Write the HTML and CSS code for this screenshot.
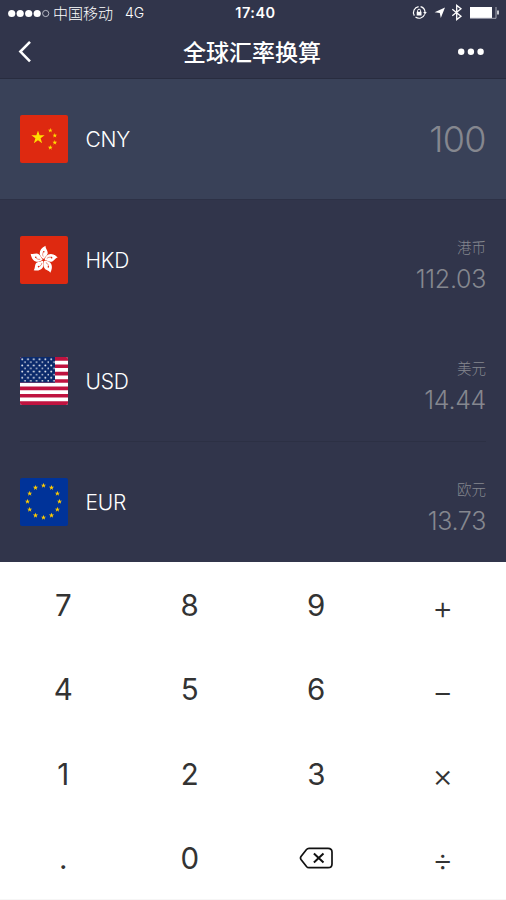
FILE: index.html
```
<!DOCTYPE html>
<html lang="zh-CN">
<head>
    <meta charset="UTF-8">
    <meta name="viewport" content="width=device-width, initial-scale=1.0">
    <title>全球汇率换算</title>
    <link rel="stylesheet" href="styles.css">
</head>
<body>
    <!-- Shared shapes for the flags -->
    <svg class="defs" aria-hidden="true">
        <symbol id="star" viewBox="-10 -10 20 20">
            <path d="M0-10 2.3-3.1H9.5L3.7 1.2 5.9 8.1 0 3.8-5.9 8.1-3.7 1.2-9.5-3.1H-2.3Z"/>
        </symbol>
        <pattern id="dots" width="5.8" height="6.2" patternUnits="userSpaceOnUse">
            <circle cx="2.2" cy="2.2" r=".95" fill="#fff"/>
            <circle cx="5" cy="5.2" r=".8" fill="#fff"/>
        </pattern>
    </svg>

    <div class="app">
        <div class="status-bar">
            <div class="carrier">
                <svg class="signal" width="42" height="9" viewBox="0 0 42 9" fill="#fff">
                    <circle cx="3.7" cy="4.5" r="3.6"/>
                    <circle cx="12.2" cy="4.5" r="3.6"/>
                    <circle cx="20.7" cy="4.5" r="3.6"/>
                    <circle cx="29.2" cy="4.5" r="3.6"/>
                    <circle cx="37.7" cy="4.5" r="3.1" fill="none" stroke="#c5c7d0" stroke-width=".9"/>
                </svg>
                <span class="operator">中国移动</span>
                <span class="network">4G</span>
            </div>
            <span class="time">17:40</span>
            <svg class="status-icons" width="90" height="18" viewBox="410 4 90 18" fill="none" stroke="#fff">
                <path d="M414.3 15.6A6 6 0 0 1 418.6 6.6M420.6 6.7A6 6 0 0 1 425 12M424.7 14.4A6 6 0 0 1 415.5 17" stroke-width="1.2"/>
                <path d="M423.2 12h3.6l-1.8 2.4Z" fill="#fff" stroke="none"/>
                <path d="M416.7 11.8h4.8v3.7h-4.8Z" fill="#fff" stroke="none"/>
                <path d="M417.6 12v-1.3a1.5 1.5 0 0 1 3 0V12"/>
                <path d="M445 7.4 440.8 18 439.8 13 434.6 12.2Z" fill="#fff" stroke="none"/>
                <path d="M452.3 9.2 461 16.2 456.7 19.6V5.4L461 8.8 452.3 15.8" stroke-width="1.3"/>
                <path d="M470 7h22v11h-22Z" fill="#fff" stroke="none"/>
                <path d="M470 18.3h26V7" stroke="#a3a6b2"/>
                <path d="M498 10.5v4" stroke="#d5d6dc" stroke-width="1.8"/>
            </svg>
        </div>

        <div class="nav">
            <svg class="back" width="16" height="24" viewBox="0 0 16 24" fill="none" stroke="#fff" stroke-width="2.6">
                <path d="M13 1.8 3.4 11.6l9.6 9.8"/>
            </svg>
            <h1>全球汇率换算</h1>
            <svg class="more" width="28" height="8" viewBox="0 0 28 8" fill="#fff">
                <circle cx="3.2" cy="3.8" r="3.2"/>
                <circle cx="12.9" cy="3.8" r="3.2"/>
                <circle cx="22.6" cy="3.8" r="3.2"/>
            </svg>
        </div>

        <div class="currency active">
            <svg class="flag" viewBox="0 0 48 48">
                <rect width="48" height="48" fill="#de2910"/>
                <g fill="#ffde00">
                    <use href="#star" x="11" y="15.5" width="14" height="14"/>
                    <use href="#star" x="27.8" y="12.9" width="5" height="5"/>
                    <use href="#star" x="32.3" y="18" width="5" height="5"/>
                    <use href="#star" x="32.3" y="25.1" width="5" height="5"/>
                    <use href="#star" x="27.8" y="30.1" width="5" height="5"/>
                </g>
            </svg>
            <span class="code">CNY</span>
            <div class="value">
                <span class="amount large">100</span>
            </div>
        </div>

        <div class="currency">
            <svg class="flag" viewBox="0 0 48 48">
                <defs>
                    <g id="petal">
                        <path d="M-.4-1.3C-5.6-4.8-5-11 2-14.2 1.4-11.6 5-9.4 3.9-6 3.1-3.8 1-3 .7-1.3Z" fill="#fff"/>
                        <path d="M-.3-3.4C-1.4-5-1-6.8-.1-8.3" fill="none" stroke="#de2910" stroke-width=".5"/>
                        <circle cx=".2" cy="-8.3" r=".8" fill="#de2910"/>
                    </g>
                </defs>
                <rect width="48" height="48" fill="#de2910"/>
                <g transform="translate(23.6 24)">
                    <use href="#petal"/>
                    <use href="#petal" transform="rotate(72)"/>
                    <use href="#petal" transform="rotate(144)"/>
                    <use href="#petal" transform="rotate(216)"/>
                    <use href="#petal" transform="rotate(288)"/>
                </g>
            </svg>
            <span class="code">HKD</span>
            <div class="value">
                <span class="name">港币</span>
                <span class="amount">112.03</span>
            </div>
        </div>

        <div class="currency lined">
            <svg class="flag" viewBox="0 0 48 48">
                <rect width="48" height="48" fill="#fff"/>
                <path d="M0 1.85h48M0 9.23h48M0 16.61h48M0 23.99h48M0 31.37h48M0 38.75h48M0 46.13h48" stroke="#bf1340" stroke-width="3.7"/>
                <rect width="35" height="25.6" fill="#0b2a6b"/>
                <rect width="35" height="25" fill="url(#dots)"/>
            </svg>
            <span class="code">USD</span>
            <div class="value">
                <span class="name">美元</span>
                <span class="amount">14.44</span>
            </div>
        </div>

        <div class="currency last">
            <svg class="flag" viewBox="0 0 48 48">
                <rect width="48" height="48" fill="#039"/>
                <g fill="#fc0">
                    <use href="#star" x="20.7" y="4.7" width="5.6" height="5.6"/>
                    <use href="#star" x="28.7" y="6.9" width="5.6" height="5.6"/>
                    <use href="#star" x="34.6" y="12.7" width="5.6" height="5.6"/>
                    <use href="#star" x="36.7" y="20.7" width="5.6" height="5.6"/>
                    <use href="#star" x="34.6" y="28.7" width="5.6" height="5.6"/>
                    <use href="#star" x="28.7" y="34.6" width="5.6" height="5.6"/>
                    <use href="#star" x="20.7" y="36.7" width="5.6" height="5.6"/>
                    <use href="#star" x="12.7" y="34.6" width="5.6" height="5.6"/>
                    <use href="#star" x="6.9" y="28.7" width="5.6" height="5.6"/>
                    <use href="#star" x="4.7" y="20.7" width="5.6" height="5.6"/>
                    <use href="#star" x="6.9" y="12.7" width="5.6" height="5.6"/>
                    <use href="#star" x="12.7" y="6.9" width="5.6" height="5.6"/>
                </g>
            </svg>
            <span class="code">EUR</span>
            <div class="value">
                <span class="name">欧元</span>
                <span class="amount">13.73</span>
            </div>
        </div>

        <!-- Calculator keys -->
        <div class="keypad">
            <button class="key">7</button>
            <button class="key">8</button>
            <button class="key">9</button>
            <button class="key op">+</button>
            <button class="key">4</button>
            <button class="key">5</button>
            <button class="key">6</button>
            <button class="key op">−</button>
            <button class="key">1</button>
            <button class="key">2</button>
            <button class="key">3</button>
            <button class="key op">×</button>
            <button class="key">.</button>
            <button class="key">0</button>
            <button class="key" aria-label="删除">
                <svg width="34" height="22" viewBox="0 0 34 22" fill="none" stroke="#111" stroke-width="1.7">
                    <path d="M10 1.3H29Q33 1.3 33 5V17Q33 20.7 29 20.7H10Q8.5 20.7 7.5 19.5L2 12.5Q1 11 2 9.5L7.5 2.5Q8.5 1.3 10 1.3Z"/>
                    <path d="M14.9 6.5 24.5 15.5M24.5 6.5 14.9 15.5" stroke-width="2"/>
                </svg>
            </button>
            <button class="key op">÷</button>
        </div>
    </div>
</body>
</html>
```
FILE: styles.css
```
* {
    box-sizing: border-box;
}
body {
    margin: 0;
    font-family: "Liberation Sans", "Noto Sans CJK SC", sans-serif;
    background-color: #31354b;
    color: #fff;
}
.defs {
    position: absolute;
    width: 0;
    height: 0;
}
.app {
    width: 506px;
    height: 900px;
    overflow: hidden;
}
.status-bar {
    display: grid;
    grid-template-columns: 1fr auto 1fr;
    align-items: center;
    height: 26px;
    padding: 0 6px 0 8px;
}
.carrier {
    display: flex;
    align-items: center;
    font-size: 15px;
    line-height: 26px;
}
.operator {
    margin-left: 3px;
    font-family: "Noto Sans CJK SC", sans-serif;
    font-weight: 300;
}
.network {
    margin-left: 12px;
    font-family: Inter, sans-serif;
    font-size: 14px;
    font-weight: 300;
}
.time {
    padding: 0 0 2px 3px;
    font-family: Inter, sans-serif;
    font-size: 14.5px;
    font-weight: 600;
    letter-spacing: 0.5px;
}
.status-icons {
    justify-self: end;
}
.nav {
    display: grid;
    grid-template-columns: 1fr auto 1fr;
    align-items: center;
    height: 53px;
    padding: 0 20px 0 17px;
    border-bottom: 1px solid #282c3f;
}
.nav h1 {
    margin: 0;
    padding: 0 0 2px 1px;
    font-family: "Noto Sans CJK SC", sans-serif;
    font-size: 23px;
    font-weight: 500;
    line-height: 50px;
}
.more {
    justify-self: end;
}
.currency {
    display: flex;
    align-items: center;
    height: 121px;
    margin: 0 20px;
    border-bottom: 1px solid transparent;
}
.currency.active {
    margin: 0;
    padding: 0 20px;
    background-color: #394158;
    border-bottom-color: #2d3146;
}
.currency.lined {
    border-bottom-color: #2c3044;
}
.currency.last {
    height: 120px;
    border-bottom: none;
}
.flag {
    width: 48px;
    height: 48px;
    border-radius: 2px;
}
.code {
    margin-left: 17.5px;
    font-family: Inter, sans-serif;
    font-size: 21px;
    font-weight: 300;
    letter-spacing: -0.2px;
}
.value {
    display: flex;
    flex-direction: column;
    align-items: flex-end;
    margin-left: auto;
    color: #85878f;
    font-family: Inter, "Noto Sans CJK SC", sans-serif;
    font-weight: 300;
}
.name {
    margin-top: 14px;
    font-family: "Noto Sans CJK SC", sans-serif;
    font-size: 14.5px;
    line-height: 24px;
}
.amount {
    font-size: 25px;
    line-height: 40px;
    letter-spacing: -0.3px;
}
.amount.large {
    font-size: 36px;
    letter-spacing: -0.6px;
}
.keypad {
    display: grid;
    grid-template-columns: repeat(4, 1fr);
    grid-template-rows: repeat(4, 1fr);
    height: 338px;
    background-color: #fff;
    border-bottom: 1px solid #f6f6f6;
}
.key {
    display: flex;
    align-items: center;
    justify-content: center;
    padding: 2px 0 0;
    border: none;
    background: none;
    color: #333;
    font-family: Inter, sans-serif;
    font-size: 29.5px;
    font-weight: 400;
    cursor: pointer;
}
.key.op {
    font-size: 32px;
    font-weight: 300;
    padding-top: 6px;
}
```
